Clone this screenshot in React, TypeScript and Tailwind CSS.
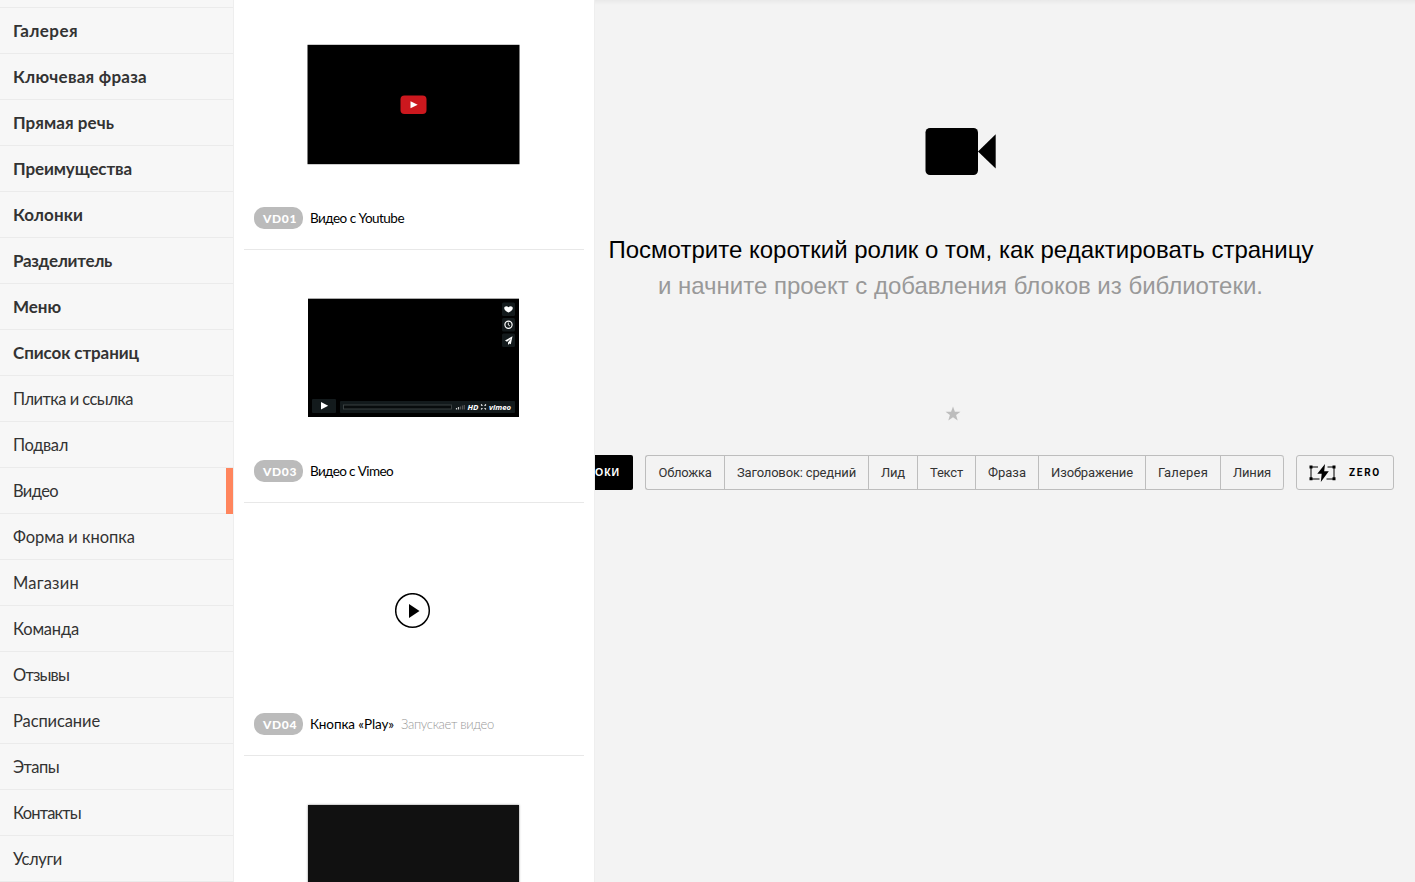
import { useLayoutEffect, useRef, useState } from "react";

type FitProps = { text: string; width: number; className?: string };

/** Single-line label whose tracking is adjusted so that it fills a given width. */
function Fit({ text, width, className = "" }: FitProps) {
  const ref = useRef<HTMLSpanElement>(null);
  const [spacing, setSpacing] = useState(0);
  useLayoutEffect(() => {
    if (!ref.current) return;
    const natural = ref.current.getBoundingClientRect().width;
    setSpacing((width - natural) / text.length);
  }, [text, width]);
  return (
    <span ref={ref} className={`inline-block whitespace-nowrap ${className}`} style={{ letterSpacing: spacing }}>
      {text}
    </span>
  );
}

const categories: { label: string; width: number; bold?: boolean; active?: boolean }[] = [
  { label: "Галерея", width: 65, bold: true },
  { label: "Ключевая фраза", width: 134, bold: true },
  { label: "Прямая речь", width: 101, bold: true },
  { label: "Преимущества", width: 119, bold: true },
  { label: "Колонки", width: 70, bold: true },
  { label: "Разделитель", width: 99, bold: true },
  { label: "Меню", width: 48, bold: true },
  { label: "Список страниц", width: 126, bold: true },
  { label: "Плитка и ссылка", width: 120 },
  { label: "Подвал", width: 55 },
  { label: "Видео", width: 45, active: true },
  { label: "Форма и кнопка", width: 122 },
  { label: "Магазин", width: 66 },
  { label: "Команда", width: 66 },
  { label: "Отзывы", width: 56 },
  { label: "Расписание", width: 87 },
  { label: "Этапы", width: 46 },
  { label: "Контакты", width: 68 },
  { label: "Услуги", width: 49 },
];

function Sidebar() {
  return (
    <nav className="flex w-[234px] shrink-0 flex-col border-r border-[#eee] bg-[#f7f7f7] text-[#333]">
      <div className="h-2 shrink-0 border-b border-[#ebebeb]" />
      {categories.map((c) => (
        <div key={c.label} className="relative flex h-[46px] shrink-0 items-center border-b border-[#ebebeb] pl-[13px] pt-px">
          <Fit text={c.label} width={c.width} className={c.bold ? "text-[17px] font-bold" : "text-[16.5px]"} />
          {c.active && <div className="absolute -bottom-px right-0 top-0 w-[7px] bg-[#ff855d]" />}
        </div>
      ))}
    </nav>
  );
}

function YoutubePreview() {
  return (
    <svg width="213" height="121" viewBox="0 0 213 121">
      <rect x="0.5" y="0.8" width="212" height="119.4" fill="#000" />
      <rect x="93.5" y="51.5" width="26" height="18.5" rx="4" fill="#cc181e" />
      <path d="M103.5 57.2v7l7.2-3.5z" fill="#fff" />
    </svg>
  );
}

function VimeoPreview() {
  return (
    <svg width="211" height="119" viewBox="0 0 211 119">
      <rect width="211" height="119" fill="#000" />
      <rect width="211" height="1" fill="#aaa" />
      <g fill="#131a1c">
        <rect x="194" y="4.5" width="13" height="13.5" rx="1.5" />
        <rect x="194" y="20" width="13" height="13.5" rx="1.5" />
        <rect x="194" y="35.5" width="13" height="13.5" rx="1.5" />
        <rect x="4" y="101" width="24" height="14" rx="1" />
        <rect x="32" y="103" width="175" height="12" rx="1" />
      </g>
      <path d="M200.5 14.500c-2-1.100-4.300-2.500-4.300-4.300 0-2 2.800-2.600 4.300-.9 1.500-1.700 4.300-1.100 4.300.9 0 1.800-2.300 3.200-4.300 4.300z" fill="#fff" />
      <circle cx="200.5" cy="26.7" r="3.6" fill="none" stroke="#fff" strokeWidth="1.2" />
      <path d="M200.3 24.500v2.500l1.700 1" fill="none" stroke="#fff" strokeWidth="0.9" />
      <path d="M204.500 38.200l-7.500 4.400 2 1.200 4-3.300-3 4v2.600l1.300-1.600 1.500.8z" fill="#fff" />
      <path d="M13 104v7.600l7.200-3.800z" fill="#fff" />
      <rect x="35.500" y="107" width="108" height="4" fill="#080c0d" stroke="#3e4546" strokeWidth="0.9" />
      <path d="M148.500 110v1.500M150.500 109v2.500" stroke="#ccc" strokeWidth="1.2" />
      <path d="M152.500 108.500v3M154.500 107.500v4M156.300 107v4.500" stroke="#555" strokeWidth="1.2" />
      <text x="159.500" y="111.600" fontSize="7" fontWeight="bold" fontStyle="italic" textLength="11" lengthAdjust="spacingAndGlyphs" className="fill-white font-['Open_Sans',sans-serif]">HD</text>
      <path d="M173 106.500l1.400 1.200M178 106.500l-1.400 1.200M173 111.400l1.400-1.200M178 111.400l-1.400-1.200" stroke="#fff" strokeWidth="1.2" />
      <text x="181" y="111.600" fontSize="7.500" fontWeight="bold" fontStyle="italic" textLength="22" lengthAdjust="spacingAndGlyphs" className="fill-white font-['Open_Sans',sans-serif]">vimeo</text>
    </svg>
  );
}

function PlayPreview() {
  return (
    <svg className="mr-px mt-px" width="36" height="36" viewBox="0 0 36 36">
      <circle cx="17.500" cy="17.500" r="16.800" fill="none" stroke="#000" strokeWidth="1.500" />
      <path d="M14 11v14l10.500-7z" fill="#000" />
    </svg>
  );
}

type CardProps = { code: string; title: string; width: number; note?: string; children: React.ReactNode };

function BlockCard({ code, title, width, note, children }: CardProps) {
  return (
    <article className="mx-2.5 flex h-[253px] shrink-0 flex-col border-b border-[#e8e8e8]">
      <div className="flex h-[214px] items-center justify-center pr-[1px]">{children}</div>
      <div className="-mt-[4px] flex h-[22px] items-center pl-2.5">
        <span className="flex h-[22px] w-[49px] items-center rounded-[10px] bg-[#bbb] pl-[9px] pt-px text-[12px] font-black text-white">
          <Fit text={code} width={34} />
        </span>
        <span className="ml-[7px] pt-px text-[13.5px] text-black">
          <Fit text={title} width={width} />
        </span>
        {note && (
          <span className="ml-[7px] pt-px text-[13px] font-light text-[#999]">
            <Fit text={note} width={93} />
          </span>
        )}
      </div>
    </article>
  );
}

function Library() {
  return (
    <section className="flex w-[360px] shrink-0 flex-col overflow-hidden bg-white">
      <div className="-mt-[3px] flex flex-col">
        <BlockCard code="VD01" title="Видео с Youtube" width={94}>
          <YoutubePreview />
        </BlockCard>
        <BlockCard code="VD03" title="Видео с Vimeo" width={83}>
          <VimeoPreview />
        </BlockCard>
        <BlockCard code="VD04" title="Кнопка «Play»" width={84} note="Запускает видео">
          <PlayPreview />
        </BlockCard>
      </div>
      <div className="ml-[74px] mt-[49px] h-[118px] w-[211px] shrink-0 bg-[#111] shadow-[0_0_2px_rgba(0,0,0,0.5)]" />
    </section>
  );
}

function CameraIcon() {
  return (
    <svg width="72" height="48" viewBox="0 0 72 48">
      <rect x="0.5" y="1" width="52.5" height="47" rx="4.5" fill="#000" />
      <path d="M53 24.500L70.700 7.300v34.200z" fill="#000" />
    </svg>
  );
}

function ZeroIcon() {
  return (
    <svg width="28" height="18" viewBox="0 0 28 18">
      <path d="M9 3h-7v12h8.500M18.500 3h6.500v12h-7.500" fill="none" stroke="#000" strokeWidth="1" />
      <path d="M0.500 1.500h3v3h-3zM23.500 1.500h3v3h-3zM0.500 13.300h3v3h-3zM23.500 13.300h3v3h-3z" fill="#000" />
      <path d="M16 0L8.300 9.800h4.400L11.800 18l8-10.800h-4.600z" fill="#000" />
    </svg>
  );
}

function Toolbar() {
  const cell = "flex items-center justify-center border-r border-[#bdbdbd]";
  return (
    <div className="mt-[34px] flex h-[35px] text-[13px] text-[#333]">
      <div className="flex w-[38px] items-center justify-end rounded-r-[2px] bg-black pr-[13px] text-[10.5px] font-bold text-white">
        <Fit text="ОКИ" width={25} />
      </div>
      <div className="ml-3 flex rounded-[3px] border border-r-0 border-[#bdbdbd] font-[Roboto,sans-serif]">
        <div className={`${cell} w-[79px]`}><Fit text="Обложка" width={53} /></div>
        <div className={`${cell} w-[144px]`}><Fit text="Заголовок: средний" width={119} /></div>
        <div className={`${cell} w-[49px]`}><Fit text="Лид" width={24} /></div>
        <div className={`${cell} w-[58px]`}><Fit text="Текст" width={33} /></div>
        <div className={`${cell} w-[63px]`}><Fit text="Фраза" width={38} /></div>
        <div className={`${cell} w-[107px]`}><Fit text="Изображение" width={82} /></div>
        <div className={`${cell} w-[75px]`}><Fit text="Галерея" width={50} /></div>
        <div className={`${cell} w-[63px] rounded-r-[3px]`}><Fit text="Линия" width={38} /></div>
      </div>
      <div className="ml-3 flex w-[98px] items-center rounded-[3px] border border-[#bdbdbd] pl-3">
        <ZeroIcon />
        <span className="ml-[12px] font-[Roboto,sans-serif] text-[10px] font-bold text-black">
          <Fit text="ZERO" width={32} />
        </span>
      </div>
    </div>
  );
}

function Editor() {
  return (
    <main className="flex min-w-0 flex-1 flex-col overflow-hidden border-l border-[#eee] bg-[#f3f3f3] font-['Liberation_Sans',sans-serif]">
      <div className="h-[5px] shrink-0 bg-linear-to-b from-[#e9e9e9] to-[#f3f3f3]" />
      <div className="flex w-[732px] flex-col items-center pt-[122px]">
        <CameraIcon />
        <div className="mt-[57px] text-center text-2xl leading-9 text-black">
          <div><Fit text="Посмотрите короткий ролик о том, как редактировать страницу" width={705} /></div>
          <div className="mr-px text-[#999]"><Fit text="и начните проект с добавления блоков из библиотеки." width={605} /></div>
        </div>
        <svg className="mr-[17px] mt-[102px]" width="16" height="15" viewBox="0 0 16 15">
          <path d="M8 0.500l1.900 5.200 5.600.1-4.400 3.300 1.600 5.300L8 11.300 3.300 14.400l1.600-5.300L.5 5.800l5.600-.1z" fill="#bdbdbd" />
        </svg>
      </div>
      <Toolbar />
    </main>
  );
}

export default function App() {
  return (
    <div className="flex h-[882px] w-[1415px] overflow-hidden bg-white font-[Lato,'Noto_Sans',sans-serif]">
      <Sidebar />
      <Library />
      <Editor />
    </div>
  );
}
